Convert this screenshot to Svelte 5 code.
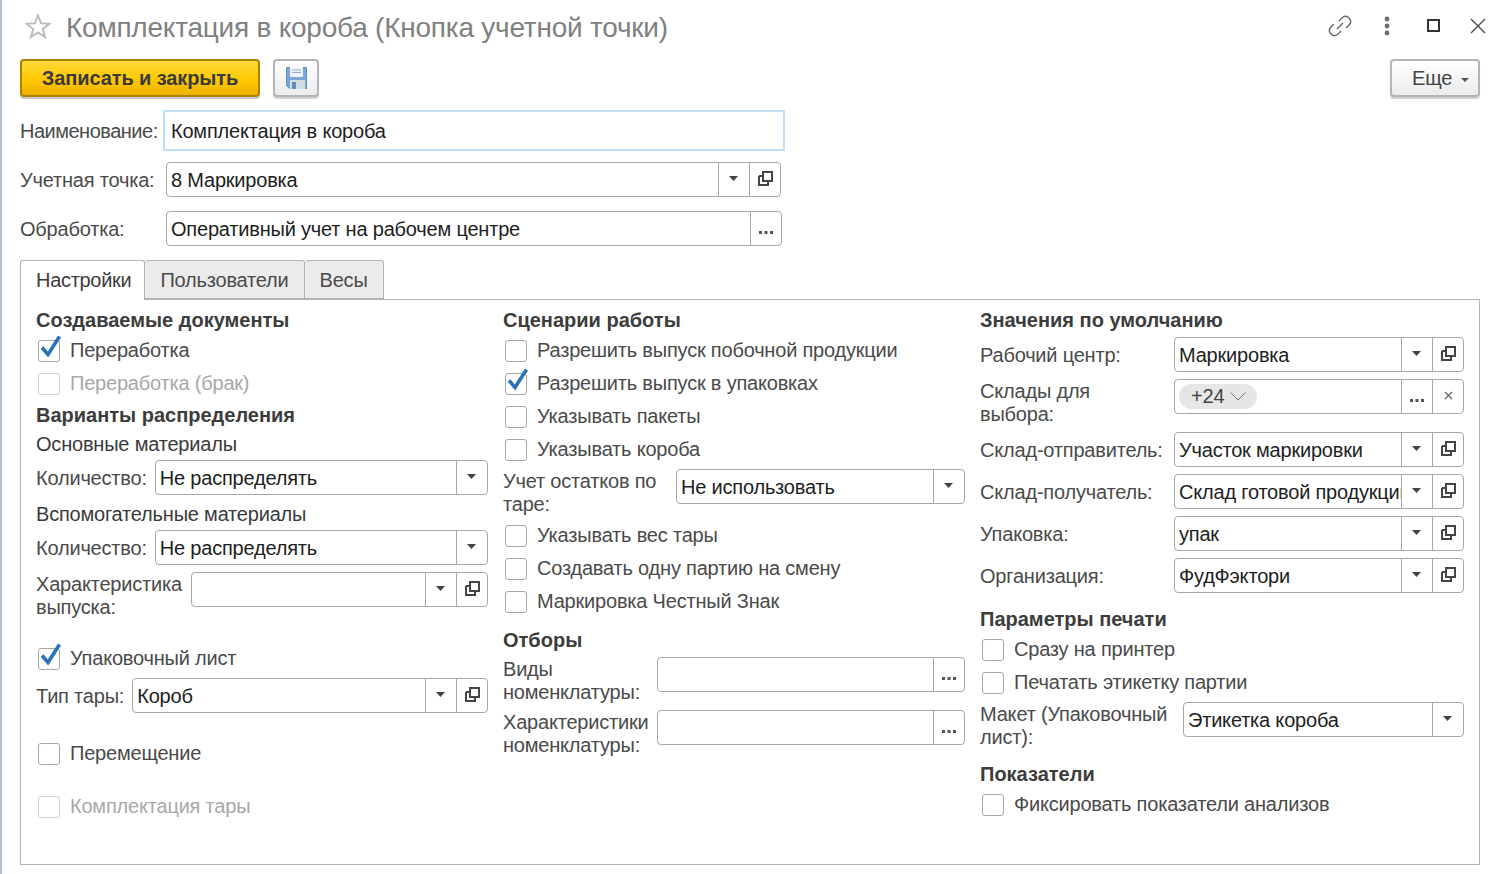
<script>
  const caret = "caret";
  const open = "open";
  const dots = "dots";
  const clear = "clear";
</script>

{#snippet check(text, cls = "", checked = false, disabled = false)}
  <label class="check {cls}" class:disabled>
    <span class="box">
      {#if checked}
        <svg class="tick" width="26" height="28" viewBox="0 0 26 28">
          <path d="M5 14.500 L11 21.500 L22.500 3.500" fill="none" stroke="#2a73bb" stroke-width="3.600" />
        </svg>
      {/if}
    </span>
    <span>{text}</span>
  </label>
{/snippet}

{#snippet btn(kind)}
  <span class="fbtn">
    {#if kind === caret}
      <svg class="caret" width="9" height="5" viewBox="0 0 9 5"><path d="M0 0h9L4.500 5z" fill="#444" /></svg>
    {:else if kind === open}
      <svg width="15" height="15" viewBox="0 0 15 15">
        <path d="M5 1h9v9H5z M1 5h4 M1 5v9h9v-4" fill="none" stroke="#444" stroke-width="2" />
      </svg>
    {:else if kind === dots}
      <svg class="dots" width="14" height="3" viewBox="0 0 14 3"><path d="M0 0h3v3H0zM5.500 0h3v3h-3zM11 0h3v3h-3z" fill="#555" /></svg>
    {:else}
      <svg width="9" height="9" viewBox="0 0 9 9"><path d="M1 1l7 7M8 1l-7 7" stroke="#666" stroke-width="1.300" fill="none" /></svg>
    {/if}
  </span>
{/snippet}

{#snippet input(value, buttons)}
  <div class="input">
    <span class="value">{value}</span>
    {#each buttons as b}
      {@render btn(b)}
    {/each}
  </div>
{/snippet}

{#snippet field(text, value, buttons, cls = "")}
  <div class="field {cls}">
    <span class="lbl">{text}</span>
    {@render input(value, buttons)}
  </div>
{/snippet}

<div class="page">
  <header class="title">
    <svg class="star" width="26" height="26" viewBox="0 0 26 26">
      <path d="M13 2.500l3 7.800 8.300.5-6.500 5.200 2.200 8-7-4.500-7 4.500 2.200-8-6.500-5.200 8.300-.5z" fill="none" stroke="#b9bdc2" stroke-width="2" />
    </svg>
    <h1>Комплектация в короба (Кнопка учетной точки)</h1>
    <div class="win">
      <svg width="24" height="24" viewBox="0 0 24 24" fill="none" stroke="#666" stroke-width="1.400">
        <path d="M11 7l3.500-3.500a5 5 0 0 1 7 7L18 14" />
        <path d="M13 17l-3.500 3.500a5 5 0 0 1-7-7L6 10" />
        <path d="M9 15l6-6" />
      </svg>
      <svg class="w-dots" width="6" height="20" viewBox="0 0 6 20"><circle cx="3" cy="3" r="2.400" fill="#6e6e6e" /><circle cx="3" cy="10" r="2.400" fill="#6e6e6e" /><circle cx="3" cy="17" r="2.400" fill="#6e6e6e" /></svg>
      <svg class="w-max" width="13" height="13" viewBox="0 0 13 13"><rect x="1" y="1" width="11" height="11" fill="none" stroke="#333" stroke-width="2" /></svg>
      <svg width="16" height="16" viewBox="0 0 16 16"><path d="M1 1l14 14M15 1L1 15" stroke="#444" stroke-width="1.300" fill="none" /></svg>
    </div>
  </header>

  <div class="toolbar">
    <button class="primary">Записать и закрыть</button>
    <button class="save" aria-label="Записать">
      <svg width="21" height="22" viewBox="0 0 21 22">
        <path d="M.5.500h20v21H3.500l-3-3z" fill="#7aa7d8" stroke="#5a8fc6" />
        <path d="M4 0h13v10H4z" fill="#f1f5f9" />
        <path d="M6 3h9M6 5.500h9" stroke="#8fb0d2" stroke-width="1" />
        <path d="M4 13h15v9H4z" fill="#d3dcdf" />
        <path d="M6 15h4v7H6z" fill="#5f8fc0" />
      </svg>
    </button>
    <button class="more">Еще<svg width="8" height="4" viewBox="0 0 8 4"><path d="M0 0h8L4 4z" fill="#555" /></svg></button>
  </div>

  <div class="name">
    <span class="lbl">Наименование:</span>
    <div class="name-input">Комплектация в короба</div>
  </div>
  <div class="top-field point">
    <span class="lbl">Учетная точка:</span>
    {@render input("8 Маркировка", [caret, open])}
  </div>
  <div class="top-field proc">
    <span class="lbl">Обработка:</span>
    {@render input("Оперативный учет на рабочем центре", [dots])}
  </div>

  <div class="tabs">
    <span class="tab active">Настройки</span>
    <span class="tab">Пользователи</span>
    <span class="tab">Весы</span>
  </div>

  <section class="panel">
    <div class="col">
      <h3>Создаваемые документы</h3>
      {@render check("Переработка", "mt3", true)}
      {@render check("Переработка (брак)", "", false, true)}
      <h3 class="mt4">Варианты распределения</h3>
      <div class="sub mt7">Основные материалы</div>
      {@render field("Количество:", "Не распределять", [caret], "mt5")}
      <div class="sub mt8">Вспомогательные материалы</div>
      {@render field("Количество:", "Не распределять", [caret], "mt5")}
      {@render field("Характеристика выпуска:", "", [caret, open], "mt7 two w155")}
      {@render check("Упаковочный лист", "mt24", true)}
      {@render field("Тип тары:", "Короб", [caret, open], "mt3")}
      {@render check("Перемещение", "mt24")}
      {@render check("Комплектация тары", "mt20", false, true)}
    </div>

    <div class="col">
      <h3>Сценарии работы</h3>
      {@render check("Разрешить выпуск побочной продукции", "mt3")}
      {@render check("Разрешить выпуск в упаковках", "", true)}
      {@render check("Указывать пакеты")}
      {@render check("Указывать короба")}
      {@render field("Учет остатков по таре:", "Не использовать", [caret], "mt3 two w173")}
      {@render check("Указывать вес тары", "mt4")}
      {@render check("Создавать одну партию на смену")}
      {@render check("Маркировка Честный Знак")}
      <h3 class="mt11">Отборы</h3>
      {@render field("Виды номенклатуры:", "", [dots], "mt6 two w154")}
      {@render field("Характеристики номенклатуры:", "", [dots], "mt7 two w154")}
    </div>

    <div class="col">
      <h3>Значения по умолчанию</h3>
      {@render field("Рабочий центр:", "Маркировка", [caret, open], "mt6 w194")}
      <div class="field mt7 two w194 narrow">
        <span class="lbl">Склады для выбора:</span>
        <div class="input">
          <span class="value"><span class="chip">+24<svg width="16" height="9" viewBox="0 0 16 9"><path d="M.5.5l7.500 7.500 7.500-7.500" fill="none" stroke="#777" /></svg></span></span>
          {@render btn(dots)}
          {@render btn(clear)}
        </div>
      </div>
      {@render field("Склад-отправитель:", "Участок маркировки", [caret, open], "mt7 w194")}
      {@render field("Склад-получатель:", "Склад готовой продукции", [caret, open], "mt7 w194")}
      {@render field("Упаковка:", "упак", [caret, open], "mt7 w194")}
      {@render field("Организация:", "ФудФэктори", [caret, open], "mt7 w194")}
      <h3 class="mt15">Параметры печати</h3>
      {@render check("Сразу на принтер", "mt3")}
      {@render check("Печатать этикетку партии")}
      {@render field("Макет (Упаковочный лист):", "Этикетка короба", [caret], "mt3 two w203")}
      <h3 class="mt15">Показатели</h3>
      {@render check("Фиксировать показатели анализов", "mt3")}
    </div>
  </section>
</div>

<style>
  :global(body) {
    margin: 0;
    background: #fff;
  }

  .page {
    box-sizing: border-box;
    width: 1501px;
    height: 874px;
    padding: 0 21px 0 20px;
    overflow: hidden;
    font-family: "Liberation Sans", Arial, sans-serif;
    font-size: 20px;
    letter-spacing: -0.2px;
    color: #4a4a4a;
    background: linear-gradient(90deg, #a9c6e4 1px, #bdbdbd 1px, #bdbdbd 2px, #fff 2px);
  }

  .title {
    display: flex;
    align-items: center;
    height: 55px;
    margin-left: 5px;
  }

  .star {
    flex: none;
    margin-bottom: 4px;
  }

  h1 {
    margin: 0 0 0 15px;
    font-size: 28px;
    font-weight: 400;
    letter-spacing: -0.23px;
    color: #808080;
    white-space: nowrap;
  }

  .win {
    margin-left: auto;
    display: flex;
    align-items: center;
    gap: 32px;
    margin-right: -6px;
    margin-bottom: 4px;
  }

  .w-max {
    margin-left: 5px;
  }

  .win svg:last-child {
    margin-left: -2px;
  }

  .toolbar {
    display: flex;
    margin-top: 4px;
    height: 38px;
    gap: 13px;
  }

  button {
    font: inherit;
    letter-spacing: inherit;
    padding: 0;
    cursor: pointer;
  }

  .primary {
    width: 240px;
    height: 38px;
    border: 2px solid #a98300;
    border-radius: 4px;
    background: linear-gradient(#ffd83c, #ffc800 55%, #eeb200);
    font-weight: 700;
    letter-spacing: -0.1px;
    color: #3a3a3a;
    box-shadow: 0 2px 1px #c8c8c8;
  }

  .save {
    width: 46px;
    height: 38px;
    border: 2px solid #b4b4b4;
    border-radius: 4px;
    background: linear-gradient(#fff, #ececec);
    box-shadow: 0 2px 1px #cfcfcf;
    display: flex;
    align-items: center;
    justify-content: center;
  }

  .more {
    margin-left: auto;
    width: 90px;
    height: 38px;
    padding-left: 20px;
    text-align: left;
    border: 2px solid #b4b4b4;
    border-radius: 4px;
    background: linear-gradient(#fff, #ececec);
    box-shadow: 0 2px 1px #cfcfcf;
    color: #444;
  }

  .more svg {
    margin: 0 0 3px 9px;
  }

  .name,
  .top-field,
  .field {
    display: flex;
    align-items: center;
  }

  .name {
    margin-top: 13px;
    height: 41px;
  }

  .name .lbl {
    width: 143px;
    flex: none;
    box-sizing: border-box;
    padding-right: 0;
    letter-spacing: -0.5px;
  }

  .name-input {
    box-sizing: border-box;
    width: 622px;
    height: 41px;
    border: 2px solid #bfe0f8;
    padding-left: 6px;
    line-height: 39px;
    color: #1e1e1e;
  }

  .top-field .lbl {
    width: 146px;
    flex: none;
    box-sizing: border-box;
    padding-right: 0;
  }

  .point {
    margin-top: 11px;
    width: 761px;
  }

  .proc {
    margin-top: 14px;
    width: 762px;
  }

  .lbl {
    line-height: 23px;
    padding-top: 2px;
    padding-right: 9px;
  }

  .input {
    box-sizing: border-box;
    flex: 1;
    min-width: 0;
    height: 35px;
    display: flex;
    align-items: stretch;
    border: 1px solid #a6a6a6;
    border-radius: 4px;
    background: #fff;
    color: #1e1e1e;
  }

  .value {
    flex: 1;
    min-width: 0;
    overflow: hidden;
    white-space: nowrap;
    padding-left: 4px;
    line-height: 35px;
  }

  .fbtn {
    flex: none;
    width: 30px;
    border-left: 1px solid #a6a6a6;
    display: flex;
    align-items: center;
    justify-content: center;
    padding-bottom: 3px;
  }

  .caret,
  .dots {
    margin-right: 1px;
  }

  .dots {
    margin-top: 10px;
  }

  .chip {
    display: inline-flex;
    align-items: center;
    gap: 6px;
    height: 25px;
    margin-top: 4px;
    padding: 0 11px 0 12px;
    border-radius: 13px;
    background: #e6e6e6;
    color: #444;
    vertical-align: top;
  }

  .tabs {
    display: flex;
    margin-top: 14px;
    height: 39px;
    position: relative;
    z-index: 1;
  }

  .tab {
    box-sizing: border-box;
    height: 39px;
    padding: 0 15px;
    line-height: 39px;
    background: #ebebeb;
    border: 1px solid #b4b4b4;
    border-left: 0;
    border-radius: 3px 3px 0 0;
  }

  .tab.active {
    background: #fff;
    border-left: 1px solid #b4b4b4;
    border-bottom: 0;
    height: 40px;
    padding-right: 13px;
    letter-spacing: -0.3px;
    color: #3c3c3c;
  }

  .panel {
    box-sizing: border-box;
    height: 566px;
    border: 1px solid #b4b4b4;
    display: grid;
    grid-template-columns: 452px 462px 484px;
    column-gap: 15px;
    padding: 9px 15px 0;
  }

  .col {
    min-width: 0;
  }

  h3 {
    margin: 0;
    font-size: 20px;
    font-weight: 700;
    letter-spacing: 0;
    line-height: 22px;
    color: #3c3c3c;
  }

  .sub {
    line-height: 22px;
    color: #3a3a3a;
  }

  .check {
    display: flex;
    align-items: center;
    height: 33px;
    gap: 10px;
    padding-left: 2px;
  }

  .check.disabled {
    color: #a8a8a8;
  }

  .box {
    box-sizing: border-box;
    position: relative;
    flex: none;
    width: 22px;
    height: 22px;
    border: 1px solid #a6a6a6;
    border-radius: 3px;
    background: #fff;
  }

  .disabled .box {
    border-color: #cfcfcf;
  }

  .tick {
    position: absolute;
    left: -2px;
    top: -8px;
  }

  .two {
    align-items: flex-start;
  }

  .two .lbl {
    flex: none;
    padding-top: 1px;
    margin-bottom: -1px;
    box-sizing: content-box;
  }

  .field .lbl {
    padding-right: 8px;
  }

  .w154 .lbl {
    width: 154px;
    padding-right: 0;
  }

  .w155 .lbl {
    width: 155px;
    padding-right: 0;
  }

  .w173 .lbl {
    width: 173px;
    padding-right: 0;
  }

  .w194 .lbl {
    width: 194px;
    flex: none;
    padding-right: 0;
  }

  .narrow .lbl {
    width: 130px;
    padding-right: 64px;
  }

  .w203 .lbl {
    width: 203px;
    padding-right: 0;
  }

  .mt3 { margin-top: 3px; }
  .mt4 { margin-top: 4px; }
  .mt5 { margin-top: 5px; }
  .mt6 { margin-top: 6px; }
  .mt7 { margin-top: 7px; }
  .mt8 { margin-top: 8px; }
  .mt11 { margin-top: 11px; }
  .mt15 { margin-top: 15px; }
  .mt20 { margin-top: 20px; }
  .mt24 { margin-top: 24px; }
</style>
